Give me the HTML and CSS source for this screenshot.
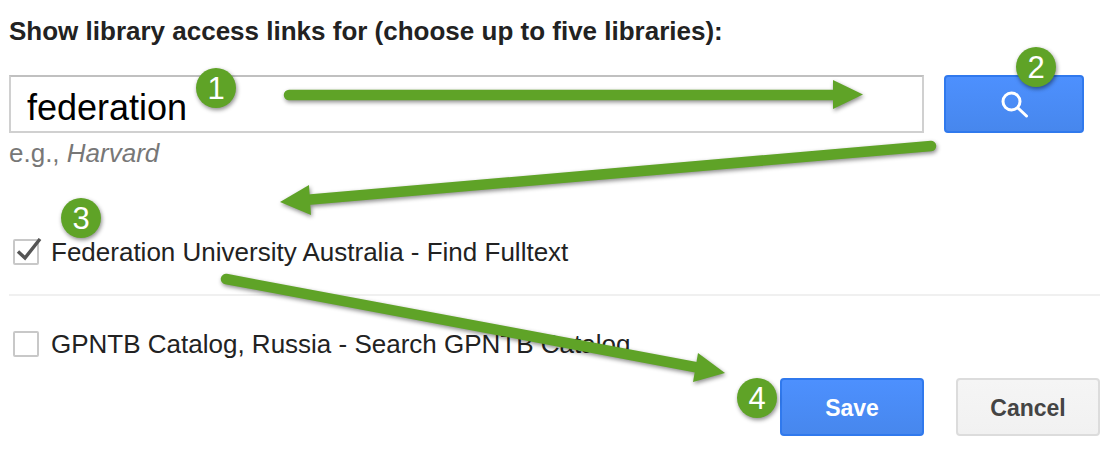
FILE: index.html
```html
<!DOCTYPE html>
<html lang="en">
<head>
<meta charset="utf-8">
<title>Library links</title>
<link rel="stylesheet" href="styles.css">
</head>
<body>
<main class="panel">
  <h1 class="title">Show library access links for (choose up to five libraries):</h1>
  <form class="search">
    <div class="search-field">federation</div>
    <div class="btn btn-primary btn-search">
      <svg class="search-icon" viewBox="0 0 30 30" width="30" height="30" aria-hidden="true"><circle cx="12.500" cy="12.500" r="8.500" fill="none" stroke="#fff" stroke-width="3"/><path d="M19 19 L27.500 27" fill="none" stroke="#fff" stroke-width="3" stroke-linecap="round"/></svg>
    </div>
  </form>
  <p class="hint">e.g., <em>Harvard</em></p>
  <div class="option option-first">
    <span class="check">
      <svg viewBox="0 0 26 26" width="26" height="26" aria-hidden="true"><path d="M2 13.500 L9 20 L24 1" fill="none" stroke="#555" stroke-width="3.400"/></svg>
    </span>
    <span class="option-label">Federation University Australia - Find Fulltext</span>
  </div>
  <hr class="rule">
  <div class="option">
    <span class="check"></span>
    <span class="option-label">GPNTB Catalog, Russia - Search GPNTB Catalog</span>
  </div>
  <div class="actions">
    <div class="btn btn-primary btn-action">Save</div>
    <div class="btn btn-plain btn-action">Cancel</div>
  </div>
</main>
<svg class="notes" viewBox="0 0 1111 451" width="1111" height="451" aria-hidden="true">
  <g class="note-shape">
    <path class="shaft" d="M289 95 L838 95"/>
    <polygon class="head" points="863,94.500 833,80 833,109"/>
    <path class="shaft" d="M931 146 L305 200"/>
    <polygon class="head" points="280,202 309,185 311,215"/>
    <path class="shaft" d="M226 279 L700 368"/>
    <polygon class="head" points="725,373 698,353 693,382"/>
  </g>
  <g class="note-shape">
    <circle class="dot" cx="216" cy="88" r="20"/>
    <circle class="dot" cx="1036" cy="67" r="20"/>
    <circle class="dot" cx="81" cy="218" r="20"/>
    <circle class="dot" cx="757" cy="398" r="20"/>
  </g>
  <text class="num" x="216" y="99">1</text>
  <text class="num" x="1036" y="78">2</text>
  <text class="num" x="81" y="229">3</text>
  <text class="num" x="757" y="409">4</text>
</svg>
</body>
</html>
```
FILE: styles.css
```css
html, body {
  margin: 0;
  padding: 0;
  background: #fff;
}
body {
  width: 1111px;
  height: 451px;
  overflow: hidden;
  position: relative;
  font-family: "Liberation Sans", Arial, sans-serif;
}
.panel {
  padding: 16px 11px 0 9px;
  display: flex;
  flex-direction: column;
}
.title {
  margin: 0 0 29px;
  font-size: 26px;
  line-height: 30px;
  font-weight: 700;
  color: #222;
}
.search {
  display: flex;
  gap: 20px;
  margin: 0;
  padding-right: 16px;
}
.search-field {
  flex: 1;
  height: 58px;
  box-sizing: border-box;
  border: 2px solid #d0d0d0;
  border-top-color: #c0c0c0;
  padding: 4px 0 0 16px;
  font-size: 36px;
  line-height: 54px;
  color: #000;
}
.btn {
  box-sizing: border-box;
  height: 58px;
  width: 140px;
  border-radius: 4px;
  display: flex;
  align-items: center;
  justify-content: center;
}
.btn-primary {
  background: linear-gradient(#4d90fe, #4787ed);
  border: 2px solid #3079ed;
  color: #fff;
}
.btn-plain {
  background: linear-gradient(#f5f5f5, #f1f1f1);
  border: 2px solid #dcdcdc;
  color: #444;
}
.search-icon {
  display: block;
}
.hint {
  margin: 5px 0 0;
  font-size: 26px;
  line-height: 30px;
  color: #777;
}
.option {
  display: flex;
  align-items: center;
  gap: 12px;
  height: 30px;
  padding-left: 4px;
  font-size: 26px;
  color: #222;
}
.option-first {
  margin-top: 69px;
}
.check {
  position: relative;
  box-sizing: border-box;
  width: 26px;
  height: 26px;
  border: 2px solid #c8c8c8;
  border-radius: 2px;
  background: #fff;
  flex: none;
}
.check svg {
  position: absolute;
  left: 1px;
  top: -3px;
}
.rule {
  margin: 27px 0 33px;
  border: 0;
  height: 2px;
  background: #f0f0f0;
}
.actions {
  display: flex;
  justify-content: flex-end;
  gap: 32px;
  margin-top: 19px;
}
.btn-action {
  width: 144px;
  padding-top: 2px;
  font-size: 23px;
  font-weight: 700;
}
.notes {
  position: absolute;
  left: 0;
  top: 0;
  pointer-events: none;
}
.note-shape {
  filter: drop-shadow(1px 2px 2px rgba(0, 0, 0, 0.45));
}
.shaft {
  fill: none;
  stroke: #5fa327;
  stroke-width: 10.500;
  stroke-linecap: round;
}
.head {
  fill: #5fa327;
}
.dot {
  fill: #5fa327;
}
.num {
  fill: #fff;
  font-family: "Liberation Sans", Arial, sans-serif;
  font-size: 31px;
  text-anchor: middle;
}
```
